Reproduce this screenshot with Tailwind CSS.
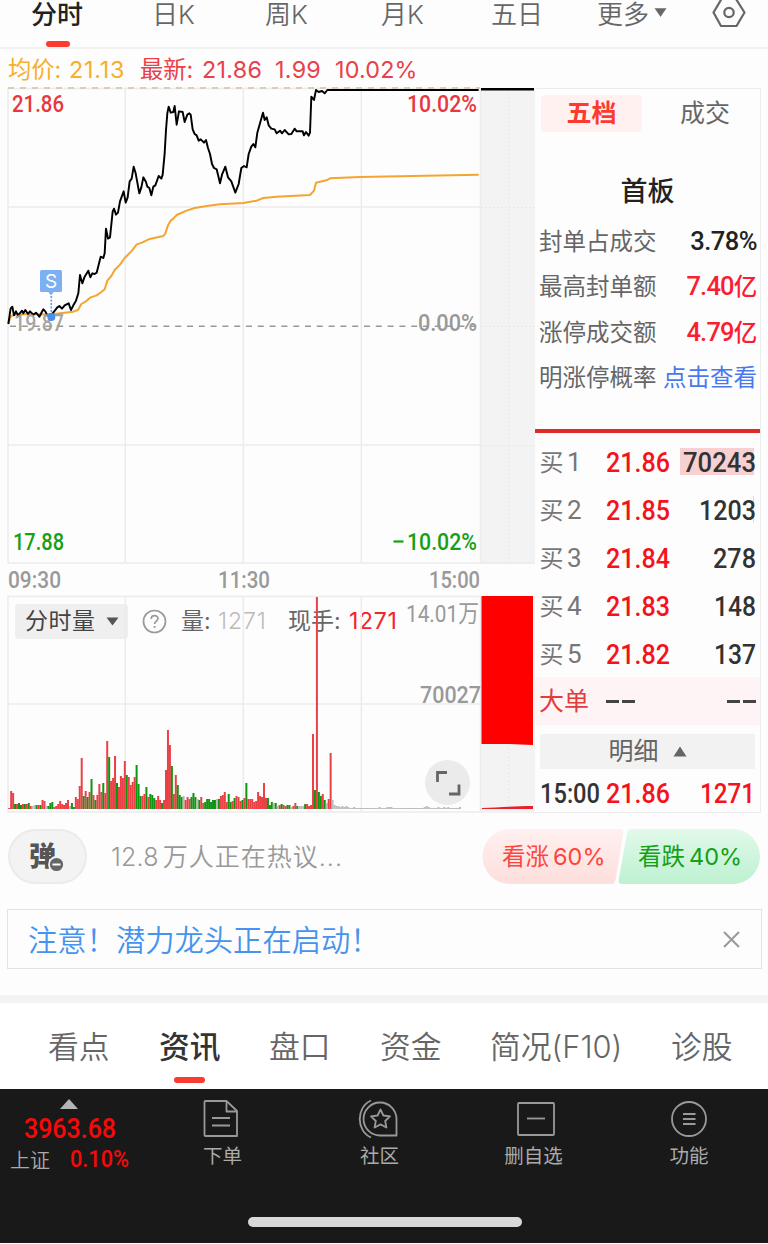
<!DOCTYPE html>
<html lang="zh-CN">
<head>
  <meta charset="UTF-8" />
  <meta name="viewport" content="width=device-width, initial-scale=1.0"/>
  <title>分时</title>
  <script src="https://cdn.jsdelivr.net/npm/@tailwindcss/browser@4"></script>
</head>
<body class="bg-[#fdfdfd] w-[768px] h-[1244px] overflow-hidden flex flex-col leading-none whitespace-nowrap text-[#666] font-['Inter','Noto_Sans_CJK_SC',sans-serif]">

  <!-- Period tabs -->
  <nav class="h-[49px] shrink-0 border-b-2 border-[#f2f2f2] pl-8 grid grid-cols-[120px_113px_116px_110px_106px_115px_1fr] text-[26px] font-[350]">
    <div class="relative -left-px font-medium text-[#222] h-[29px] flex items-center">分时
      <span class="absolute left-[15px] top-[41px] w-6 h-[6px] rounded-full bg-[#fb3a30]"></span>
    </div>
    <div class="h-[29px] flex items-center">日K</div>
    <div class="h-[29px] flex items-center">周K</div>
    <div class="h-[29px] flex items-center">月K</div>
    <div class="h-[29px] flex items-center">五日</div>
    <div class="h-[29px] flex items-center">更多
      <svg class="ml-[5px] mt-[-4px]" width="13" height="9" viewBox="0 0 13 9"><path d="M1 .5h11L6.500 8.500z" fill="#666" stroke="#666" stroke-width=".5"/></svg>
    </div>
    <svg width="34" height="29" viewBox="0 0 34 29" fill="none" stroke="#666" stroke-width="2.200">
      <path d="M9.500 -1h14.500L32.500 12.500 24.500 26h-15.500L1.500 12.500z" stroke-linejoin="round"/>
      <circle cx="17" cy="12.500" r="4.700"/>
    </svg>
  </nav>

  <!-- Price summary -->
  <div class="h-[39px] shrink-0 pl-2 pt-[2px] grid grid-cols-[61px_71px_62px_73px_60px_1fr] items-center text-[23.300px] text-[#e8414a]">
    <span class="text-[#f7ae2b]">均价:</span>
    <span class="text-[#f7ae2b] tracking-[0.8px]">21.13</span>
    <span>最新:</span>
    <span class="tracking-[0.3px]">21.86</span>
    <span class="tracking-[0.300px]">1.99</span>
    <span class="tracking-[0.200px]">10.02%</span>
  </div>

  <main class="h-[725px] shrink-0 pl-2 flex">

    <!-- Charts -->
    <section class="w-[527px] shrink-0 flex flex-col">
      <svg class="shrink-0 overflow-visible" width="527" height="476" viewBox="0 0 527 476" fill="none">
        <rect x="473" y="1" width="54" height="475" fill="#f3f3f3"/>
        <path d="M500.500 1v474M473 119.500h54M473 238.500h54M473 357.500h54" stroke="#e8e8e8" stroke-dasharray="2 2"/>
        <path d="M0 .5h472M0 0v475M117.300 0v475M235.300 0v475M353.300 0v475M472.500 0v475M0 119h472M0 357h472M0 475h527" stroke="#ececec" stroke-width="1.500"/>
        <path d="M0 0h472" stroke="#ddcdb8" stroke-width="2" stroke-dasharray="6 6"/>
        <path d="M2 238.300h471" stroke="#999" stroke-width="1.500" stroke-dasharray="6 5.800"/>
        <g transform="scale(.33333) translate(-24 -24)" stroke-linejoin="round">
          <polyline stroke="#f5a52f" stroke-width="6" points="25,730 32,710 42,704 100,702 150,704 180,700 220,695 234,690 244,672 258,664 272,652 290,646 304,636 314,628 322,602 334,588 344,570 360,554 374,534 396,512 410,493 426,488 446,478 490,468 496,460 504,436 512,422 520,416 530,405 560,392 584,384 620,378 660,373 730,369 770,362 790,354 830,350 930,345 942,332 948,308 982,300 990,295 1080,291 1436,284"/>
          <polyline stroke="#000" stroke-width="5.800" points="25,732 32,685 37,680 42,706 48,694 54,706 66,692 70,700 76,690 84,702 90,694 100,704 108,698 118,710 130,688 136,694 142,706 158,700 172,682 178,678 186,686 194,676 206,670 213,690 220,676 228,662 235,640 240,585 247,610 254,590 265,572 271,592 277,580 284,582 290,578 302,530 310,534 314,520 318,446 324,476 330,472 338,395 342,386 348,404 354,398 360,364 371,334 377,368 383,352 389,304 395,296 401,260 407,280 418,340 424,322 430,292 438,306 442,320 448,324 454,346 460,320 466,316 476,288 484,296 488,284 494,220 498,150 502,100 506,80 512,98 520,96 524,78 530,134 537,94 548,96 554,126 562,104 568,100 572,104 578,148 584,162 590,166 596,182 602,178 612,188 618,180 624,204 630,222 636,252 642,264 650,268 660,310 666,284 676,260 684,292 694,304 706,338 716,312 724,264 732,258 740,262 746,222 754,200 760,192 766,202 772,158 780,130 789,98 794,120 800,112 806,136 814,146 824,148 830,160 840,152 846,160 854,150 866,163 874,162 884,146 890,154 908,154 912,166 918,156 926,167 930,158 934,50 942,60 948,30 956,36 966,33 974,40 982,30 1436,30"/>
        </g>
        <path d="M473 1.200h53" stroke="#000" stroke-width="2.500"/>
        <g class="font-['Roboto']" font-size="24" font-weight="500">
          <text x="4" y="23.500" textLength="52" lengthAdjust="spacingAndGlyphs" fill="#e8383d">21.86</text>
          <text x="399" y="23.500" textLength="70" lengthAdjust="spacingAndGlyphs" fill="#e8383d">10.02%</text>
          <text x="6" y="242.500" textLength="50" lengthAdjust="spacingAndGlyphs" fill="#999" fill-opacity=".9">19.87</text>
          <text x="410" y="242.500" textLength="59" lengthAdjust="spacingAndGlyphs" fill="#999">0.00%</text>
          <text x="5" y="461.500" textLength="51" lengthAdjust="spacingAndGlyphs" fill="#15a015">17.88</text>
          <text x="399" y="461.500" textLength="70" lengthAdjust="spacingAndGlyphs" fill="#15a015">10.02%</text>
          <path d="M385.500 453.500h10" stroke="#15a015" stroke-width="2.200"/>
        </g>
        <!-- Sell marker -->
        <rect x="32" y="182" width="22" height="22" rx="1.500" fill="#7cb0f0"/>
        <text class="font-['Inter']" x="43" y="200" font-size="19" fill="#fff" text-anchor="middle">S</text>
        <path d="M40 203.500h6l-3 4z" fill="#7cb0f0"/>
        <path d="M43.300 208v17" stroke="#5a9bee" stroke-width="1.600" stroke-dasharray="2 1.500"/>
        <circle cx="43.300" cy="229" r="4" fill="#4a90e8"/>
      </svg>

      <div class="h-8 shrink-0">
        <svg class="font-['Roboto'] overflow-visible" width="480" height="32" viewBox="0 0 480 32" font-size="23.500" font-weight="500" fill="#999">
          <text x="0" y="23.500" textLength="53" lengthAdjust="spacingAndGlyphs">09:30</text>
          <text x="210" y="23.500" textLength="52" lengthAdjust="spacingAndGlyphs">11:30</text>
          <text x="421" y="23.500" textLength="51" lengthAdjust="spacingAndGlyphs">15:00</text>
        </svg>
      </div>

      <div class="relative h-[217px]">
        <!-- Volume toolbar -->
        <div class="absolute left-[7px] top-2 h-[35px] flex items-center text-[23px]">
          <div class="w-[113px] h-full rounded bg-[#efefef] flex items-center pl-[10px] text-[#444] tracking-[0.5px]">分时量
            <svg class="ml-[10px]" width="13" height="9" viewBox="0 0 13 9"><path d="M.5 .5h12L6.500 8.500z" fill="#555"/></svg>
          </div>
          <svg class="ml-[14px]" width="25" height="25" viewBox="0 0 25 25" fill="none" stroke="#999" stroke-width="1.700">
            <circle cx="12.500" cy="12.500" r="11"/>
            <path d="M9.200 10c0-4.400 6.800-4.300 6.800-.4 0 2.400-3.400 2.600-3.400 5.400"/>
            <path d="M12.600 17v2"/>
          </svg>
          <span class="ml-[14px] w-[37px]">量:</span>
          <span class="w-[70px] text-[#bbb] font-[350] tracking-[0.900px]">1271</span>
          <span class="w-[61px]">现手:</span>
          <span class="text-[#f5222d] tracking-[0.700px]">1271</span>
        </div>
        <svg class="absolute left-0 top-0 overflow-visible" width="527" height="217" viewBox="0 0 527 217" fill="none">
          <path d="M0 .5h472M0 0v216M117.300 0v216M235.300 0v216M353.300 0v216M472.500 0v216M0 108h472M0 216h527" stroke="#ececec" stroke-width="1.500"/>
          <rect x="473" y="0" width="54" height="216" fill="#f3f3f3"/>
          <path d="M500.500 148v64" stroke="#e8e8e8" stroke-dasharray="2 2"/>
          <path d="M473.500 0h51.500v149l-24-1h-27.500z" fill="#f00"/>
          <path d="M474 212c16-.5 32-2 51-2v3h-51z" fill="#e8202a"/>
          <g id="volumeBars"></g>
          <g class="font-['Roboto','Noto_Sans_CJK_SC']" font-size="23.500" fill="#999">
            <text x="398" y="26" textLength="73" lengthAdjust="spacingAndGlyphs">14.01万</text>
            <text x="412" y="107" textLength="61" lengthAdjust="spacingAndGlyphs" font-weight="500">70027</text>
          </g>
          <circle cx="439.500" cy="186.500" r="22.500" fill="#ebebeb"/>
          <path d="M429.500 186v-9.500h9.500M441 198h10v-9.500" stroke="#666" stroke-width="2.800"/>
        </svg>
      </div>
    </section>

    <!-- Order book -->
    <aside class="w-[226px] shrink-0 border-r border-y border-[#ececec] flex flex-col">
      <div class="mt-[6px] ml-[6px] h-[37px] shrink-0 flex items-center text-[25px]">
        <div class="w-[101px] h-full rounded bg-[#fff1f0] text-[#fb3a30] font-bold flex items-center justify-center">五档</div>
        <div class="ml-[38px]">成交</div>
      </div>
      <div class="mt-[45px] h-7 shrink-0 flex items-center justify-center text-[27px] font-medium text-[#222]">首板</div>

      <div class="mt-[14px] h-[182px] shrink-0 pl-1 pr-[3px] flex flex-col text-[23.500px]">
        <div class="h-[45.400px] flex items-center justify-between">封单占成交 <b class="font-medium text-[#222] font-['Roboto'] text-[25.500px] tracking-[-0.500px]">3.78%</b></div>
        <div class="h-[45.400px] flex items-center justify-between">最高封单额 <b class="font-medium text-[#fa1e32] font-['Roboto','Noto_Sans_CJK_SC'] tracking-[-0.300px]"><span class="text-[25.500px] tracking-[-0.800px]">7.40</span>亿</b></div>
        <div class="h-[45.400px] flex items-center justify-between">涨停成交额 <b class="font-medium text-[#fa1e32] font-['Roboto','Noto_Sans_CJK_SC'] tracking-[-0.300px]"><span class="text-[25.500px] tracking-[-0.800px]">4.79</span>亿</b></div>
        <div class="h-[45.400px] flex items-center justify-between">明涨停概率 <span class="text-[#4a78ee]">点击查看</span></div>
      </div>

      <div class="mt-[28px] h-1 shrink-0 bg-[#e02a2a]"></div>

      <div id="bids" class="mt-1 h-60 shrink-0"></div>

      <div class="h-12 shrink-0 bg-[#fff4f5] pl-1 pr-[4px] flex items-center text-[25px] text-[#e23c3c]">
        大单
        <span class="ml-[17px] flex gap-[3px]"><i class="w-[13px] h-[3px] bg-[#444]"></i><i class="w-[13px] h-[3px] bg-[#444]"></i></span>
        <span class="ml-auto flex gap-[3px]"><i class="w-[13px] h-[3px] bg-[#444]"></i><i class="w-[13px] h-[3px] bg-[#444]"></i></span>
      </div>
      <div class="mt-[9px] mx-[5px] h-[35px] shrink-0 bg-[#f2f2f2] flex items-center justify-center text-[25px]">明细
        <svg class="ml-[14px]" width="14" height="11" viewBox="0 0 14 11"><path d="M7 .5L13.500 10.500H.5z" fill="#666"/></svg>
      </div>
      <svg class="shrink-0 overflow-visible font-['Roboto']" width="225" height="38" viewBox="0 0 225 38" font-size="27" font-weight="500" fill="#f5121c">
        <text x="5" y="34" textLength="60" lengthAdjust="spacingAndGlyphs" fill="#333">15:00</text>
        <text x="71" y="34" textLength="64" lengthAdjust="spacingAndGlyphs">21.86</text>
        <text x="165" y="34" textLength="55" lengthAdjust="spacingAndGlyphs">1271</text>
      </svg>
    </aside>
  </main>

  <!-- Discussion and poll -->
  <div class="mt-4 h-[55px] shrink-0 pl-2 pr-2 flex items-center">
    <div class="w-[79px] h-[55px] rounded-full border-2 border-[#ebebeb] bg-[#f3f3f3] flex items-center justify-center">
      <div class="relative -left-[5px] text-[27px] font-black text-[#555]">弹
        <svg class="absolute left-[19px] top-[13px]" width="17" height="17" viewBox="0 0 17 17">
          <circle cx="8.500" cy="8.500" r="7.500" fill="#666" stroke="#f3f3f3" stroke-width="1.800"/>
          <path d="M4.500 8.500h8" stroke="#fff" stroke-width="2"/>
        </svg>
      </div>
    </div>
    <div class="ml-6 pt-[2px] text-[25px] text-[#999] font-[350] tracking-[1px]"><span class="mr-1 tracking-[0.200px]">12.8</span>万人正在热议...</div>
    <div class="relative ml-auto w-[278px] h-[55px]">
      <svg class="absolute inset-0" width="278" height="55" viewBox="0 0 278 55">
        <defs>
          <linearGradient id="up" x2="0" y2="1"><stop stop-color="#fff0ef"/><stop offset="1" stop-color="#fddfdc"/></linearGradient>
          <linearGradient id="down" x2="0" y2="1"><stop stop-color="#e2f9ea"/><stop offset="1" stop-color="#bdf1d1"/></linearGradient>
        </defs>
        <path d="M28 0H138q4 0 3.300 4L133.500 51q-.8 4-5 4H28A27.500 27.500 0 0 1 28 0z" fill="url(#up)"/>
        <path d="M150 0H250.500A27.500 27.500 0 0 1 250.500 55H140q-4 0-3.300-4L145 4q.8-4 5-4z" fill="url(#down)"/>
      </svg>
      <div class="absolute inset-0 pt-px flex items-center text-[23.500px]">
        <span class="ml-5 w-[136px] text-[#fb4640]">看涨<span class="ml-[4px]">60%</span></span>
        <span class="text-[#15a015]">看跌<span class="ml-[4px]">40%</span></span>
      </div>
    </div>
  </div>

  <!-- Notice -->
  <div class="mt-[25px] mx-[7px] h-[60px] w-[755px] shrink-0 border-[1.500px] border-[#e2e2e2] pl-5 pr-[21px] flex items-center justify-between">
    <span class="pt-[3px] text-[29.300px] font-[350] text-[#4593ee]">注意！潜力龙头正在启动！</span>
    <svg width="17" height="17" viewBox="0 0 17 17" fill="none" stroke="#999" stroke-width="2"><path d="M1 1l15 15M16 1L1 16"/></svg>
  </div>

  <div class="mt-[26px] h-2 shrink-0 bg-[#f3f3f3]"></div>

  <!-- Content tabs -->
  <nav class="h-[86px] shrink-0 bg-white pl-12 pt-[3px] grid grid-cols-[111px_110px_111px_110px_181px_1fr] items-center text-[30.800px] font-[350]">
    <div>看点</div>
    <div class="relative font-medium text-[#333]">资讯
      <span class="absolute left-[15px] top-[45px] w-[31px] h-[6px] rounded-full bg-[#fb3a30]"></span>
    </div>
    <div>盘口</div>
    <div>资金</div>
    <div>简况(F10)</div>
    <div>诊股</div>
  </nav>

  <!-- Bottom bar -->
  <footer class="h-[154px] shrink-0 bg-[#191919] flex flex-col">
    <div class="h-[100px] grid grid-cols-[144px_157px_157px_155px_155px] text-[19.500px] text-[#aaa]">
      <svg width="144" height="90" viewBox="0 0 144 90" class="font-['Roboto','Noto_Sans_CJK_SC']" fill="#f50a0a">
        <path d="M69 10l9 10H60z" fill="#b5b5b5"/>
        <text x="24" y="48.500" font-size="27" font-weight="500" textLength="92" lengthAdjust="spacingAndGlyphs">3963.68</text>
        <text x="10" y="78.500" font-size="20" fill="#aaa" font-weight="350">上证</text>
        <text x="70" y="78" font-size="24" font-weight="500" textLength="59" lengthAdjust="spacingAndGlyphs">0.10%</text>
      </svg>
      <div class="flex flex-col items-center">
        <svg class="mt-[10px] mr-[3px]" width="40" height="40" viewBox="0 0 40 40" fill="none" stroke="#999" stroke-width="1.800" stroke-linejoin="round">
          <path d="M4.500 2h21L36 12v25H4.500q-1 0-1-1V3q0-1 1-1z"/><path d="M25.500 2v10.500H36M11 19h18M11 26.500h18"/>
        </svg>
        <span class="mt-[8px]">下单</span>
      </div>
      <div class="flex flex-col items-center">
        <svg class="mt-[10px] mr-1" width="42" height="40" viewBox="0 0 42 40" fill="none" stroke="#999" stroke-width="1.800" stroke-linejoin="round">
          <path d="M39.500 36.500H23.500A16.500 16.500 0 1 1 39.500 20z"/><path d="M14 1.500C-1 8-1 32 14 38.500"/>
          <path d="M23.500 10.500l2.900 6 6.600.9-4.800 4.600 1.200 6.500-5.900-3.100-5.900 3.100 1.200-6.500-4.800-4.600 6.600-.9z"/>
        </svg>
        <span class="mt-[8px]">社区</span>
      </div>
      <div class="relative -left-[2px] flex flex-col items-center">
        <svg class="mt-[10px] ml-1" width="40" height="40" viewBox="0 0 40 40" fill="none" stroke="#999" stroke-width="1.800">
          <rect x="2" y="4" width="36" height="32" rx="1"/><path d="M11 19.500h18"/>
        </svg>
        <span class="mt-[8px]">删自选</span>
      </div>
      <div class="relative -left-[1.500px] flex flex-col items-center">
        <svg class="mt-[10px]" width="40" height="40" viewBox="0 0 40 40" fill="none" stroke="#999" stroke-width="1.800">
          <circle cx="20" cy="20" r="17"/><path d="M14 15h12.500M14 20h12.500M14 25h12.500"/>
        </svg>
        <span class="mt-[8px]">功能</span>
      </div>
    </div>
    <div class="mt-7 ml-[248px] w-[274px] h-[10px] rounded-full bg-[#d9d9d9]"></div>
  </footer>

  <script>
    // One entry per minute: r = up, g = down, n = flat, followed by bar height
    const volumes = `r1 r18 r16 g5 r5 g6 g4 r5 g5 r5 g6 r3 n3 n4 g4 r4 g4 r9 r8 n3 g3 g6 g7 r2 r3 r5 r8 r5 r4 r6 r9 n3 g6 g2
      r12 r10 r23 r51 g13 r18 g12 r17 g30 r14 g9 r14 r25 r17 g26 r16 r68 g52 r28 r31 r53 g26 r22 r33 r31 r48 g34 r32 r24 r27
      r32 g44 g25 g13 r13 r15 g22 r12 g15 g14 g11 r9 r13 r9 g6 r9 r39 r79 r64 g43 r15 r34 g24 g14 g12 n13 r9 r12 r10 g12 g16
      g12 n10 g9 r12 r6 g7 g10 g10 g7 g9 g9 n10 g10 r13 r14 r17 r7 g15 g7 r8 g11 r13 r12 r8 g9 r11 g26 r10 r10 r10 r7 r8 r17
      r13 r12 r26 r11 g11 g4 g7 n6 g6 n3 r4 g5 r4 r3 g4 g4 n2 r3 r6 g3 n3 n3 n3 g5 r5 r3 r4 r75 g19 r212 g17 g13 r15 g9 n6 r10
      r56 n9 n4 n3 n3 n2 n3 n2 n3 n2 n1 n1 n2 n1 n1 n1 n1 n1 n1 n1 n1 n1 n1 n1 n1 n2 n1 n1 n1 n2 n2 n2 n1 n1 n1 n1 n1 n1 n1 n1 n1
      n1 n1 n1 n1 n1 n1 n1 n2 n3 n2 n1 n1 n1 n1 n2 n1 n1 n2 n1 n2 n1 n1 n1 n1 n1 n2`.split(/\s+/);
    const barColors = { r: "#ea4046", g: "#109512", n: "#bbb" };
    document.getElementById("volumeBars").innerHTML = volumes.map((v, i) => {
      const h = +v.slice(1);
      return `<rect x="${(0.2 + i * 1.96).toFixed(2)}" y="${213 - h}" width="2" height="${h}" fill="${barColors[v[0]]}"/>`;
    }).join("");

    const bids = [
      { price: "21.86", amount: "70243", w: 73, bar: 74 },
      { price: "21.85", amount: "1203", w: 57, bar: 1 },
      { price: "21.84", amount: "278", w: 43, bar: 0 },
      { price: "21.83", amount: "148", w: 42, bar: 0 },
      { price: "21.82", amount: "137", w: 42, bar: 0 },
    ];
    document.getElementById("bids").innerHTML = bids.map((b, i) => `
      <svg width="225" height="48" viewBox="0 0 225 48" class="overflow-visible font-['Roboto','Noto_Sans_CJK_SC']" font-size="27.500">
        <rect x="${219 - b.bar}" y="11" width="${b.bar}" height="27" fill="#f8d0d2"/>
        <text x="4.500" y="33.500" font-size="24" fill="#777">买</text>
        <text x="32" y="34" font-size="26" fill="#777">${i + 1}</text>
        <text x="71" y="34.500" font-weight="500" fill="#f5121c" textLength="64" lengthAdjust="spacingAndGlyphs">${b.price}</text>
        <text x="${221 - b.w}" y="34.500" font-weight="500" fill="#333" textLength="${b.w}" lengthAdjust="spacingAndGlyphs">${b.amount}</text>
      </svg>`).join("");
  </script>
</body>
</html>
